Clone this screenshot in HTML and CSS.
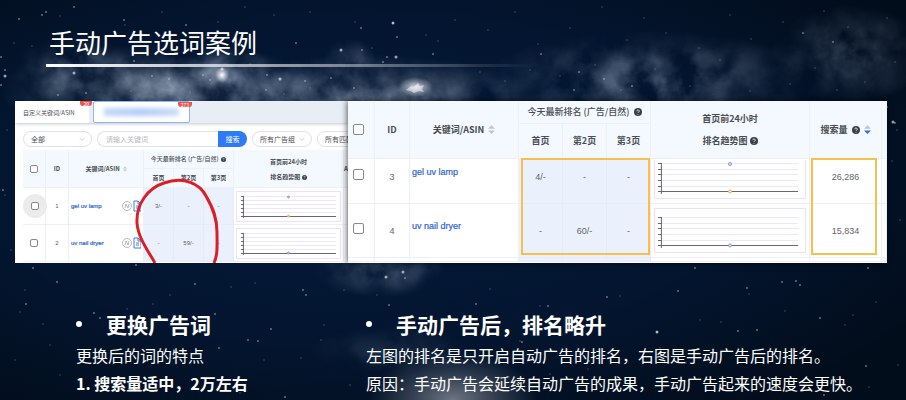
FILE: index.html
```html
<!DOCTYPE html>
<html lang="zh-CN">
<head>
    <meta charset="UTF-8">
    <meta name="viewport" content="width=device-width, initial-scale=1.0">
    <title>手动广告选词案例</title>
    <link rel="stylesheet" href="styles.css">
</head>
<body>
    <!-- starry sky -->
    <svg class="sky" viewBox="0 0 906 400" preserveAspectRatio="xMidYMid slice" aria-hidden="true">
        <defs>
            <radialGradient id="glow">
                <stop offset="0" stop-color="#fff" stop-opacity="1"/>
                <stop offset=".5" stop-color="#fff" stop-opacity=".45"/>
                <stop offset="1" stop-color="#fff" stop-opacity="0"/>
            </radialGradient>
            <radialGradient id="base" cx=".4" cy=".45" r=".7">
                <stop offset="0" stop-color="#04193a"/>
                <stop offset=".6" stop-color="#03152f"/>
                <stop offset="1" stop-color="#020d1c"/>
            </radialGradient>
            <filter id="dust" x="0" y="0" width="100%" height="100%" color-interpolation-filters="sRGB">
                <feTurbulence type="fractalNoise" baseFrequency=".03" numOctaves="5" seed="8"/>
                <feColorMatrix values="0 0 0 0 .5  0 0 0 0 .57  0 0 0 0 .66  1.5 1 0 0 -.8"/>
            </filter>
            <mask id="clouds">
                <ellipse cx="75" cy="68" rx="60" ry="34" fill="url(#glow)" opacity=".7"/>
                <ellipse cx="165" cy="90" rx="170" ry="46" fill="url(#glow)"/>
                <ellipse cx="220" cy="80" rx="70" ry="34" fill="url(#glow)"/>
                <ellipse cx="370" cy="96" rx="170" ry="42" fill="url(#glow)"/>
                <ellipse cx="350" cy="60" rx="26" ry="22" fill="url(#glow)" opacity=".6"/>
                <ellipse cx="650" cy="80" rx="170" ry="50" fill="url(#glow)" opacity=".8"/>
                <ellipse cx="850" cy="54" rx="80" ry="50" fill="url(#glow)" opacity=".6"/>
                <ellipse cx="380" cy="270" rx="70" ry="28" fill="url(#glow)" opacity=".7"/>
                <ellipse cx="390" cy="350" rx="80" ry="26" fill="url(#glow)" opacity=".3"/>
            </mask>
        </defs>
        <rect width="906" height="400" fill="url(#base)"/>
        <g mask="url(#clouds)">
            <rect width="906" height="400" filter="url(#dust)"/>
        </g>
        <ellipse cx="160" cy="86" rx="130" ry="28" fill="url(#glow)" opacity=".12"/>
        <ellipse cx="370" cy="92" rx="120" ry="24" fill="url(#glow)" opacity=".12"/>
        <ellipse cx="453" cy="400" rx="85" ry="48" fill="url(#glow)" opacity=".42"/>
        <ellipse cx="416" cy="87" rx="17" ry="10" fill="url(#glow)" opacity=".8"/>
        <path d="M406 90l5-4 3 1 4-4 2 3 4-1-2 4 2 3-5-1-5 2-3-2z" fill="#fff" opacity=".5"/>
        <ellipse cx="222" cy="75" rx="7" ry="8" fill="url(#glow)"/>
        <g class="stars">
            <path class="stars-faint" d="M14 43h0M32 46h0M60 16h0M125 25h0M162 12h0M218 22h0M245 7h0M274 15h0M310 12h0M355 22h0M372 48h0M426 35h0M438 41h0M455 20h0M488 30h0M515 12h0M538 44h0M570 28h0M602 7h0M627 40h0M644 18h0M666 33h0M699 48h0M730 15h0M751 39h0M783 22h0M824 11h0M848 27h0M887 18h0M895 62h0M7 130h0M5 195h0M11 250h0M897 130h0M892 161h0M900 220h0M20 312h0M43 324h0M25 290h0M153 304h0M127 309h0M170 295h0M231 287h0M255 283h0M324 325h0M301 358h0M321 340h0M344 290h0M377 295h0M350 385h0M490 289h0M520 341h0M540 306h0M620 296h0M550 374h0M660 348h0M686 363h0M749 294h0M785 311h0M845 325h0M853 315h0M876 302h0M869 387h0M898 365h0M700 320h0M721 322h0M588 369h0M60 375h0M15 360h0M240 393h0M264 360h0M50 345h0M480 72h0M505 81h0M530 70h0M560 76h0M595 65h0M621 90h0M655 69h0M690 86h0M720 60h0M750 91h0M790 84h0M815 68h0M837 90h0M865 82h0M131 91h0M190 92h0M250 64h0M284 94h0M310 88h0"/>
            <path class="stars-mid" d="M46 12h0M42 15h0M74 7h0M186 25h0M134 61h0M152 76h0M169 79h0M203 75h0M210 80h0M266 90h0M267 75h0M305 81h0M354 88h0M362 50h0M361 28h0M397 37h0M433 54h0M387 57h0M383 62h0M19 19h0M124 20h0M58 95h0M86 93h0M331 78h0M296 43h0M393 23h0M5 70h0M1 57h0M1 85h0M541 54h0M579 72h0M604 79h0M632 86h0M574 90h0M803 33h0M833 42h0M887 107h0M895 123h0M3 190h0M57 282h0M26 304h0M94 313h0M100 318h0M215 314h0M219 348h0M258 341h0M248 340h0M271 329h0M303 290h0M195 284h0M306 295h0M389 305h0M476 304h0M607 297h0M548 306h0M522 342h0M782 282h0M796 281h0M800 285h0M820 318h0M738 331h0M757 330h0M747 288h0M678 291h0M657 332h0M866 366h0M824 395h0M33 268h0M136 265h0M695 268h0M868 268h0M285 397h0M589 361h0M405 278h0"/>
            <path class="stars-bright" d="M74 73h0M280 79h0M341 50h0M393 23h0M222 69h0M893 122h0M657 332h0M396 57h0M5 76h0M403 272h0M386 277h0"/>
        </g>
    </svg>

    <main class="slide">
        <header class="slide-header">
            <h1 class="slide-title">手动广告选词案例</h1>
            <div class="rule"></div>
        </header>

        <div class="panels">
            <!-- before -->
            <section class="panel panel-before">
                <nav class="tabs">
                    <button class="tab">自定义关键词/ASIN<span class="badge">20</span></button>
                    <button class="tab tab-current" aria-label="ASIN"><span class="masked"></span><span class="badge">273</span></button>
                </nav>
                <form class="filters">
                    <label class="pill pill-all">
                        <select class="pill-select" aria-label="范围"><option>全部</option></select>
                        <svg class="chevron" viewBox="0 0 8 6"><path d="M1 1l3 3.500 3-3.500"/></svg>
                    </label>
                    <div class="search">
                        <input class="search-input" type="text" placeholder="请输入关键词" aria-label="关键词">
                        <button class="search-button" type="button">搜索</button>
                    </div>
                    <label class="pill pill-group">
                        <select class="pill-select" aria-label="广告组"><option>所有广告组</option></select>
                        <svg class="chevron" viewBox="0 0 8 6"><path d="M1 1l3 3.500 3-3.500"/></svg>
                    </label>
                    <label class="pill pill-match">
                        <select class="pill-select" aria-label="匹配"><option>所有匹配</option></select>
                    </label>
                </form>
                <table class="grid grid-small">
                    <colgroup>
                        <col class="s-check"><col class="s-id"><col class="s-word">
                        <col class="s-rank"><col class="s-rank"><col class="s-rank">
                        <col class="s-chart"><col>
                    </colgroup>
                    <thead>
                        <tr>
                            <th rowspan="2"><input class="check" type="checkbox" aria-label="全选"></th>
                            <th rowspan="2">ID</th>
                            <th rowspan="2">关键词/ASIN &nbsp;<svg class="sort" viewBox="0 0 8 10"><path d="M4 0l4 4H0z"/><path d="M4 10l4-4H0z"/></svg></th>
                            <th class="group" colspan="3">今天最新排名 (广告/自然) &nbsp;<svg class="help" viewBox="0 0 10 10"><circle cx="5" cy="5" r="5"/><path d="M3.500 4a1.500 1.500 0 1 1 2.300 1.200Q5 5.600 5 6.300M5 7.500v.8"/></svg></th>
                            <th class="double" rowspan="2">首页前24小时<br>排名趋势图 <svg class="help" viewBox="0 0 10 10"><circle cx="5" cy="5" r="5"/><path d="M3.500 4a1.500 1.500 0 1 1 2.300 1.200Q5 5.600 5 6.300M5 7.500v.8"/></svg></th>
                            <th class="cut" rowspan="2">A</th>
                        </tr>
                        <tr>
                            <th>首页</th>
                            <th>第2页</th>
                            <th>第3页</th>
                        </tr>
                    </thead>
                    <tbody>
                        <tr>
                            <td><span class="ripple"><input class="check" type="checkbox" aria-label="1"></span></td>
                            <td>1</td>
                            <td class="word">
                                <div class="word-line">
                                    <a class="keyword" href="#">gel uv lamp</a>
                                    <svg class="mark" viewBox="0 0 20 12"><circle cx="6" cy="6" r="4.500"/><path d="M4 8l1-4 2 4 1-4"/><path class="mark-doc" d="M13 1h4l3 3v7h-7zM17 1v3h3M15 6h3M15 8h3"/></svg>
                                </div>
                            </td>
                            <td class="rank">3/-</td>
                            <td class="rank">-</td>
                            <td class="rank">-</td>
                            <td class="trend">
                                <svg class="chart" viewBox="0 0 106 31" preserveAspectRatio="none">
                                    <path class="chart-box" d="M.5.5h105v30H.5z"/>
                                    <path class="chart-grid" d="M7 5.500h94M7 9.500h94M7 13.500h94M7 17.500h94M7 21.500h94"/>
                                    <path class="chart-axis" d="M7.500 5v22M5 5.500h3M5 9.500h3M5 13.500h3M5 17.500h3M5 21.500h3M5 25.500h96"/>
                                    <circle class="dot" cx="53" cy="6" r="1"/>
                                    <circle class="dot dot-ad" cx="53" cy="25" r="1"/>
                                </svg>
                            </td>
                            <td></td>
                        </tr>
                        <tr>
                            <td><input class="check" type="checkbox" aria-label="2"></td>
                            <td>2</td>
                            <td class="word">
                                <div class="word-line">
                                    <a class="keyword" href="#">uv nail dryer</a>
                                    <svg class="mark" viewBox="0 0 20 12"><circle cx="6" cy="6" r="4.500"/><path d="M4 8l1-4 2 4 1-4"/><path class="mark-doc" d="M13 1h4l3 3v7h-7zM17 1v3h3M15 6h3M15 8h3"/></svg>
                                </div>
                            </td>
                            <td class="rank">-</td>
                            <td class="rank">59/-</td>
                            <td class="rank">-</td>
                            <td class="trend">
                                <svg class="chart" viewBox="0 0 106 31" preserveAspectRatio="none">
                                    <path class="chart-box" d="M.5.5h105v30H.5z"/>
                                    <path class="chart-grid" d="M7 5.500h94M7 9.500h94M7 13.500h94M7 17.500h94M7 21.500h94"/>
                                    <path class="chart-axis" d="M7.500 5v22M5 5.500h3M5 9.500h3M5 13.500h3M5 17.500h3M5 21.500h3M5 25.500h96"/>
                                    <circle class="dot" cx="53" cy="25" r="1"/>
                                </svg>
                            </td>
                            <td></td>
                        </tr>
                    </tbody>
                </table>
                <!-- hand drawn circle -->
                <svg class="scribble" viewBox="0 0 90 90"><path d="M24 87C18 76 7 62 6 47 5 28 17 12 33 7c20-7 36 1 42 13 7 12 11 22 11 36 0 13 1 22-3 31"/></svg>
            </section>

            <!-- after -->
            <section class="panel panel-after">
                <table class="grid grid-large">
                    <colgroup>
                        <col class="l-check"><col class="l-id"><col class="l-word">
                        <col class="l-rank"><col class="l-rank"><col class="l-rank">
                        <col><col class="l-volume"><col class="l-end">
                    </colgroup>
                    <thead>
                        <tr>
                            <th rowspan="2"><input class="check" type="checkbox" aria-label="全选"></th>
                            <th rowspan="2">ID</th>
                            <th rowspan="2">关键词/ASIN&nbsp; <svg class="sort" viewBox="0 0 8 10"><path d="M4 0l4 4H0z"/><path d="M4 10l4-4H0z"/></svg></th>
                            <th class="group" colspan="3">今天最新排名 (广告/自然) &nbsp;<svg class="help" viewBox="0 0 10 10"><circle cx="5" cy="5" r="5"/><path d="M3.500 4a1.500 1.500 0 1 1 2.300 1.200Q5 5.600 5 6.300M5 7.500v.8"/></svg></th>
                            <th class="double" rowspan="2">首页前24小时<br>排名趋势图 <svg class="help" viewBox="0 0 10 10"><circle cx="5" cy="5" r="5"/><path d="M3.500 4a1.500 1.500 0 1 1 2.300 1.200Q5 5.600 5 6.300M5 7.500v.8"/></svg></th>
                            <th rowspan="2">搜索量&nbsp; <svg class="help" viewBox="0 0 10 10"><circle cx="5" cy="5" r="5"/><path d="M3.500 4a1.500 1.500 0 1 1 2.300 1.200Q5 5.600 5 6.300M5 7.500v.8"/></svg>&nbsp; <svg class="sort" viewBox="0 0 8 10"><path d="M4 0l4 4H0z"/><path class="sort-on" d="M4 10l4-4H0z"/></svg></th>
                            <th rowspan="2"></th>
                        </tr>
                        <tr>
                            <th>首页</th>
                            <th>第2页</th>
                            <th>第3页</th>
                        </tr>
                    </thead>
                    <tbody>
                        <tr class="row-cut">
                            <td class="pick"><input class="check" type="checkbox" aria-label="3"></td>
                            <td>3</td>
                            <td class="word"><a class="keyword" href="#">gel uv lamp</a></td>
                            <td class="rank">4/-</td>
                            <td class="rank">-</td>
                            <td class="rank">-</td>
                            <td class="trend">
                                <svg class="chart" viewBox="0 6 154 39" preserveAspectRatio="none">
                                    <path class="chart-box" d="M.5.5h153v44H.5z"/>
                                    <path class="chart-grid" d="M7 9.500h139M7 15.500h139M7 20.500h139M7 26.500h139M7 32.500h139"/>
                                    <path class="chart-axis" d="M7.500 9v31M4 9.500h4M4 15.500h4M4 20.500h4M4 26.500h4M4 32.500h4M4 37.500h142"/>
                                    <circle class="dot" cx="77" cy="10" r="1.500"/>
                                    <circle class="dot dot-ad" cx="77" cy="37.500" r="1.500"/>
                                </svg>
                            </td>
                            <td class="volume">26,286</td>
                            <td></td>
                        </tr>
                        <tr>
                            <td class="pick"><input class="check" type="checkbox" aria-label="4"></td>
                            <td>4</td>
                            <td class="word"><a class="keyword" href="#">uv nail dryer</a></td>
                            <td class="rank">-</td>
                            <td class="rank">60/-</td>
                            <td class="rank">-</td>
                            <td class="trend">
                                <svg class="chart" viewBox="0 0 154 45" preserveAspectRatio="none">
                                    <path class="chart-box" d="M.5.5h153v44H.5z"/>
                                    <path class="chart-grid" d="M7 9.500h139M7 15.500h139M7 20.500h139M7 26.500h139M7 32.500h139"/>
                                    <path class="chart-axis" d="M7.500 9v31M4 9.500h4M4 15.500h4M4 20.500h4M4 26.500h4M4 32.500h4M4 37.500h142"/>
                                    <circle class="dot" cx="77" cy="37.500" r="1.500"/>
                                </svg>
                            </td>
                            <td class="volume">15,834</td>
                            <td></td>
                        </tr>
                        <tr class="row-next">
                            <td></td><td></td><td></td>
                            <td class="rank"></td><td class="rank"></td><td class="rank"></td>
                            <td></td><td></td><td></td>
                        </tr>
                    </tbody>
                </table>
                <div class="frame frame-rank"></div>
                <div class="frame frame-volume"></div>
            </section>
        </div>

        <div class="notes">
            <section class="note">
                <h2 class="note-title"><span class="bullet"></span>更换广告词</h2>
                <p>更换后的词的特点</p>
                <p class="strong">1. 搜索量适中，2万左右</p>
            </section>
            <section class="note">
                <h2 class="note-title"><span class="bullet"></span>手动广告后，排名略升</h2>
                <p>左图的排名是只开启自动广告的排名，右图是手动广告后的排名。</p>
                <p>原因：手动广告会延续自动广告的成果，手动广告起来的速度会更快。</p>
            </section>
        </div>
    </main>
</body>
</html>
```

FILE: styles.css
```css
* {
    box-sizing: border-box;
}
body {
    margin: 0;
    min-height: 100vh;
    background: #03132a;
    color: #fff;
    font-family: "Noto Sans CJK SC", sans-serif;
    overflow: hidden;
}
button, input, select {
    margin: 0;
    font-family: inherit;
    font-size: inherit;
    color: inherit;
}
.sky {
    position: absolute;
    top: 0;
    left: 0;
    width: 100%;
    height: 100%;
}
.stars path {
    fill: none;
    stroke: #c3d2e2;
    stroke-linecap: round;
}
.stars .stars-faint {
    stroke-width: 1.5px;
    opacity: .35;
}
.stars .stars-mid {
    stroke-width: 2px;
    opacity: .5;
}
.stars .stars-bright {
    stroke: #fff;
    stroke-width: 3px;
    opacity: .6;
}
.slide {
    position: relative;
}

/* header */
.slide-header {
    padding: 26px 46px 0;
}
.slide-title {
    margin: 0;
    padding-left: 3px;
    font-size: 26px;
    line-height: 32px;
    font-weight: 400;
}
.rule {
    width: 60%;
    height: 3px;
    margin-top: 6px;
    background: linear-gradient(to right, #fff, rgba(255, 255, 255, .5) 55%, rgba(255, 255, 255, 0));
}

/* screenshots */
.panels {
    display: flex;
    margin: 34px 19px 0 15px;
}
.panel {
    position: relative;
    height: 162px;
    min-width: 0;
    overflow: hidden;
    background: #fff;
    color: #4a4d52;
}
.panel-before {
    flex: 333;
    font-size: 6px;
}
.panel-after {
    flex: 539;
    overflow: visible;
    box-shadow: -1px 0 6px rgba(0, 0, 0, .6);
    font-size: 9px;
}

.tabs {
    display: flex;
    gap: 4px;
    height: 22px;
    background: #e8eef6;
    box-shadow: 0 1px 3px rgba(60, 70, 90, .3);
}
.tab {
    position: relative;
    width: 74px;
    padding: 0 0 0 8px;
    border: 0;
    background: #fff;
    text-align: left;
    white-space: nowrap;
}
.tab-current {
    width: 97px;
    border: 1px solid #8db4f3;
    border-radius: 2px;
    padding: 0 10px;
}
.masked {
    display: block;
    height: 8px;
    background: linear-gradient(to right, #c2d7fa, #b2cdfa, #cbdcf9);
    filter: blur(2px);
}
.badge {
    position: absolute;
    top: 0;
    right: -3px;
    padding: 0 3px;
    border-radius: 0 0 3px 3px;
    background: #ef5350;
    color: #fff;
    font-size: 5px;
    line-height: 5px;
}

.filters {
    display: flex;
    gap: 5px;
    padding: 8px 0 3px 8px;
    font-size: 7px;
}
.pill {
    position: relative;
    flex: none;
    height: 16px;
    border: 1px solid #dfe2e8;
    border-radius: 8px;
}
.pill-all {
    width: 69px;
}
.pill-group {
    width: 60px;
}
.pill-match {
    width: 60px;
}
.pill-select {
    display: block;
    width: 100%;
    height: 14px;
    padding: 0 7px;
    border: 0;
    background: none;
    appearance: none;
}
.chevron {
    position: absolute;
    top: 5px;
    right: 6px;
    width: 6px;
    height: 5px;
    fill: none;
    stroke: #c0c4cc;
}
.search {
    display: flex;
    flex: none;
    width: 150px;
    height: 16px;
}
.search-input {
    flex: 1;
    min-width: 0;
    padding: 0 8px;
    border: 1px solid #dfe2e8;
    border-right: 0;
    border-radius: 8px 0 0 8px;
}
.search-input::placeholder {
    color: #b5b9c0;
}
.search-button {
    width: 29px;
    padding: 0;
    border: 0;
    border-radius: 0 8px 8px 0;
    background: #2f7bf5;
    color: #fff;
}

/* tables */
.grid {
    width: 100%;
    table-layout: fixed;
    border-collapse: separate;
    border-spacing: 0;
}
.grid th,
.grid td {
    padding: 0;
    border-right: 1px solid #edf1f6;
    border-bottom: 1px solid #edf1f6;
    text-align: center;
    white-space: nowrap;
}
.grid th {
    background: #f3f9fe;
    font-weight: 700;
}
.grid td {
    font-family: "Liberation Sans", "Noto Sans CJK SC", sans-serif;
    color: #5f6368;
}
.grid .group {
    font-weight: 500;
}
.grid .rank {
    background: #eaf1fd;
    border-color: #e4ecf9;
}
.grid .word {
    text-align: left;
    padding-left: 2px;
}
.keyword {
    color: #2c62d6;
    text-decoration: none;
    -webkit-text-stroke: .2px #2c62d6;
}
.check {
    display: block;
    width: 11px;
    height: 11px;
    margin: 0 auto;
    appearance: none;
    border: 1px solid #85898f;
    border-radius: 2px;
    background: #fff;
}
.help {
    width: 8px;
    height: 8px;
    vertical-align: -1px;
    fill: #3c4046;
}
.help path {
    fill: none;
    stroke: #fff;
}
.sort {
    width: 7px;
    height: 9px;
    vertical-align: -1px;
    fill: #c0c4cc;
}
.sort-on {
    fill: #2f6bf0;
}
.chart {
    display: block;
    width: 100%;
}
.chart path {
    fill: none;
}
.chart .chart-box {
    stroke: #efdff7;
}
.chart .chart-grid {
    stroke: #ece6f6;
}
.chart .chart-axis {
    stroke: #66686c;
}
.dot {
    fill: #dfe9ff;
    stroke: #6b96ea;
}
.dot-ad {
    fill: #fdebd0;
    stroke: #eba85c;
}

.grid-small {
    width: calc(100% - 8px);
    margin-left: 8px;
}
.s-check, .s-id {
    width: 23px;
}
.s-word {
    width: 75px;
}
.s-rank {
    width: 30px;
}
.s-chart {
    width: 110px;
}
.grid-small th {
    height: 19px;
    line-height: 8px;
}
.grid-small td {
    height: 37px;
    line-height: 8px;
}
.grid-small .double {
    line-height: 15px;
}
.grid-small .cut {
    text-align: left;
    border-right: 0;
}
.grid-small .check {
    width: 8px;
    height: 8px;
}
.grid-small .help {
    width: 5px;
    height: 5px;
}
.grid-small .sort {
    width: 4px;
    height: 6px;
}
.grid-small .chart {
    height: 31px;
}
.grid-small .trend {
    padding: 0 2px;
}
.ripple {
    display: flex;
    align-items: center;
    width: 24px;
    height: 24px;
    border-radius: 50%;
    background: #ebebeb;
}
.word-line {
    display: flex;
    align-items: center;
    justify-content: space-between;
    padding-right: 2px;
}
.mark {
    width: 20px;
    height: 12px;
    fill: none;
    stroke: #a4a8ae;
    stroke-width: .8px;
}
.mark-doc {
    stroke: #3f7fe8;
    stroke-width: 1px;
}
.scribble {
    position: absolute;
    top: 75px;
    left: 116px;
    width: 90px;
    height: 90px;
    fill: none;
    stroke: #dc1f26;
    stroke-width: 3px;
}

.l-check {
    width: 27px;
}
.l-id {
    width: 35px;
}
.l-word {
    width: 109px;
}
.l-rank {
    width: 44px;
}
.l-volume {
    width: 72px;
}
.l-end {
    width: 5px;
}
.grid-large th {
    height: 35px;
    line-height: 12px;
}
.grid-large .group {
    height: 23px;
}
.grid-large .double {
    line-height: 22px;
}
.grid-large td {
    height: 54px;
    padding-bottom: 18px;
    line-height: 16px;
    vertical-align: bottom;
}
.grid-large .check {
    margin-left: 5px;
}
.grid-large .row-cut td {
    height: 45px;
}
.grid-large .row-next td {
    height: 4px;
    padding: 0;
    line-height: 0;
}
.grid-large .word,
.grid-large .pick {
    padding-bottom: 23px;
}
.grid-large .trend {
    padding: 0 3px 4px;
}
.grid-large .chart {
    height: 45px;
}
.grid-large .row-cut .chart {
    height: 39px;
}
.frame {
    position: absolute;
    top: 57px;
    height: 97px;
    border: 2px solid #f7c04c;
}
.frame-rank {
    left: 173px;
    width: 129px;
}
.frame-volume {
    right: 10px;
    width: 66px;
}

/* notes */
.notes {
    display: grid;
    grid-template-columns: 290px 1fr;
    padding: 44px 0 0 76px;
}
.note-title {
    display: flex;
    align-items: center;
    margin: 0;
    font-size: 21px;
    line-height: 34px;
    font-weight: 700;
}
.bullet {
    width: 6px;
    height: 6px;
    margin-right: 24px;
    border-radius: 50%;
    background: #fff;
}
.note p {
    margin: 0;
    font-size: 16px;
    line-height: 28px;
    white-space: nowrap;
}
.note .strong {
    font-weight: 700;
}
```
